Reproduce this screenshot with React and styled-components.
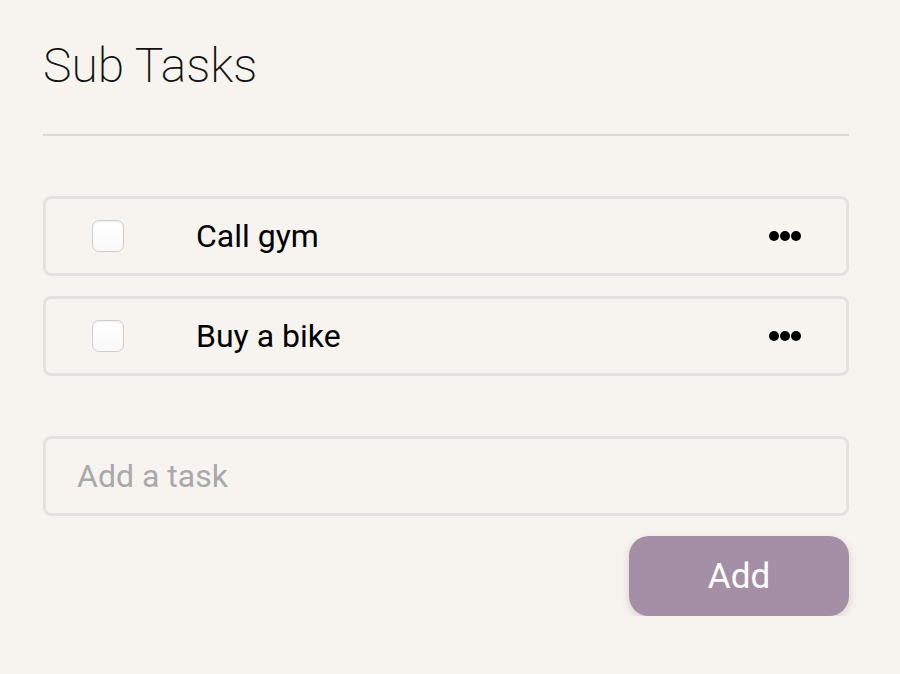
import React from "react";
import styled, { createGlobalStyle } from "styled-components";

const GlobalStyle = createGlobalStyle`
  body {
    margin: 0;
    background: #f7f4f0;
    font-family: Roboto, "Liberation Sans", sans-serif;
  }
`;

const tasks = ["Call gym", "Buy a bike"];

const App = () => {
  return (
    <>
      <GlobalStyle />
      <Page>
        <Title>Sub Tasks</Title>
        <Divider />
        <TaskList>
          {tasks.map((t) => (
            <TaskRow key={t}>
              <Check type="checkbox" />
              <TaskName>{t}</TaskName>
              <MoreButton aria-label="more">
                <svg width="32" height="10" viewBox="0 0 32 10">
                  <circle cx="5" cy="5" r="5" fill="#000" />
                  <circle cx="16" cy="5" r="5" fill="#000" />
                  <circle cx="27" cy="5" r="5" fill="#000" />
                </svg>
              </MoreButton>
            </TaskRow>
          ))}
        </TaskList>
        <AddForm>
          <TaskInput placeholder="Add a task" />
          <AddButton>Add</AddButton>
        </AddForm>
      </Page>
    </>
  );
};

const Page = styled.div`
  padding: 42px 51px 0 43px;
`;

const Title = styled.h1`
  margin: 0;
  font-size: 48px;
  line-height: 48px;
  font-weight: 200;
  color: #111;
`;

const Divider = styled.hr`
  margin: 44px 0 0;
  border: 0;
  border-top: 2px solid #dcd9d5;
`;

const TaskList = styled.div`
  margin-top: 60px;
  display: flex;
  flex-direction: column;
  gap: 20px;
`;

const TaskRow = styled.div`
  box-sizing: border-box;
  height: 80px;
  display: flex;
  align-items: center;
  padding: 0 45px 0 46px;
  border: 3px solid #e3e2e0;
  border-radius: 8px;
`;

const Check = styled.input`
  appearance: none;
  margin: 0;
  width: 32px;
  height: 32px;
  border: 1px solid #cfcfcf;
  border-radius: 7px;
  background: linear-gradient(#fff, #f9f9f9);
  box-shadow: inset 0 1px 2px rgba(0, 0, 0, 0.06);
  flex: none;
`;

const TaskName = styled.span`
  margin-left: 72px;
  flex: 1;
  font-size: 32px;
  line-height: 36px;
  color: #000;
`;

const MoreButton = styled.button`
  border: 0;
  background: none;
  padding: 0;
  display: flex;
  cursor: pointer;
`;

const AddForm = styled.div`
  margin-top: 60px;
  display: flex;
  flex-direction: column;
  align-items: flex-end;
  gap: 20px;
`;

const TaskInput = styled.input`
  box-sizing: border-box;
  width: 100%;
  height: 80px;
  border: 3px solid #e3e2e0;
  border-radius: 8px;
  background: transparent;
  padding: 0 0 0 31px;
  font-family: Roboto, "Liberation Sans", sans-serif;
  font-size: 32px;
  color: #000;
  outline: none;
  &::placeholder {
    color: #a9a9a9;
  }
`;

const AddButton = styled.button`
  width: 220px;
  height: 80px;
  border: 0;
  border-radius: 20px;
  background: #a48fa7;
  color: #fff;
  font-family: Roboto, "Liberation Sans", sans-serif;
  font-size: 35px;
  box-shadow: 0 3px 8px rgba(0, 0, 0, 0.15);
  cursor: pointer;
`;

export default App;
